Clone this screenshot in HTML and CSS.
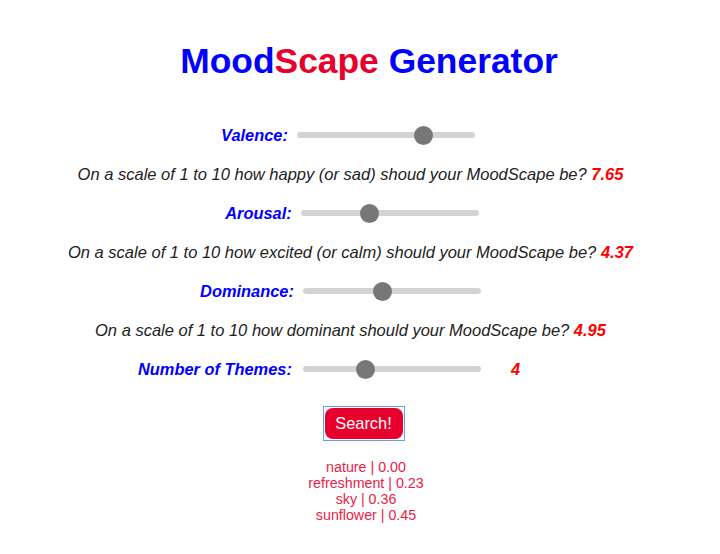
FILE: index.html
```html
<!DOCTYPE html>
<html>
<head>
<meta charset="utf-8">
<link rel="stylesheet" href="styles.css">
</head>
<body>
<h1 class="title"><span class="blue">Mood</span><span class="red">Scape</span> <span class="blue">Generator</span></h1>

<div class="row row-valence">
  <label class="lbl">Valence:</label>
  <input class="slider" type="range" min="1" max="10" step="0.01" value="7.65">
</div>
<p class="sentence">On a scale of 1 to 10 how happy (or sad) shoud your MoodScape be? <span class="val">7.65</span></p>

<div class="row row-arousal">
  <label class="lbl">Arousal:</label>
  <input class="slider" type="range" min="1" max="10" step="0.01" value="4.37">
</div>
<p class="sentence">On a scale of 1 to 10 how excited (or calm) should your MoodScape be? <span class="val">4.37</span></p>

<div class="row row-dominance">
  <label class="lbl">Dominance:</label>
  <input class="slider" type="range" min="1" max="10" step="0.01" value="4.95">
</div>
<p class="sentence">On a scale of 1 to 10 how dominant should your MoodScape be? <span class="val">4.95</span></p>

<div class="row row-themes">
  <label class="lbl">Number of Themes:</label>
  <input class="slider" type="range" min="1" max="10" step="1" value="4">
  <span class="val count">4</span>
</div>

<div class="actions">
  <span class="focus-ring"><button class="search">Search!</button></span>
</div>

<div class="results">
  <div>nature | 0.00</div>
  <div>refreshment | 0.23</div>
  <div>sky | 0.36</div>
  <div>sunflower | 0.45</div>
</div>
</body>
</html>
```

FILE: styles.css
```css
body {
  margin: 8px;
  font-family: "Liberation Sans", Arial, sans-serif;
  background: #fff;
}

.title {
  margin: 33px 0 0;
  padding-left: 18px;
  font-size: 35.4px;
  line-height: 40px;
  font-weight: bold;
  text-align: center;
  height: 40px;
}
.blue { color: #0000ff; }
.red { color: #e8002c; }

.row {
  margin-top: 0;
  height: 39px;
  display: flex;
  align-items: center;
  justify-content: center;
  gap: 9px;
}
.row-valence { margin-top: 34.5px; padding-right: 24px; }
.row-arousal { padding-right: 16px; }
.row-dominance { padding-right: 39px; }
.row-themes { padding-right: 62px; gap: 11px; }

.lbl {
  color: #0000ff;
  font-weight: bold;
  font-style: italic;
  font-size: 16.4px;
}

.slider {
  -webkit-appearance: none;
  appearance: none;
  margin: 0;
  width: 178px;
  height: 6px;
  border-radius: 3px;
  background: #d3d3d3;
  outline: none;
}
.slider::-webkit-slider-thumb {
  -webkit-appearance: none;
  appearance: none;
  width: 19px;
  height: 19px;
  border-radius: 50%;
  background: #777;
  border: none;
}

.sentence {
  margin: 0;
  height: 39px;
  line-height: 39px;
  text-align: center;
  padding-right: 19px;
  font-size: 16.5px;
  font-style: italic;
  color: #222;
}

.val {
  color: #ff0000;
  font-weight: bold;
  font-style: italic;
}
.count {
  margin-left: 19px;
  font-size: 16.4px;
}

.actions {
  margin-top: 17.5px;
  display: flex;
  justify-content: center;
  padding-left: 7px;
}
.focus-ring {
  display: inline-block;
  border: 1px solid #6a9bf2;
  padding: 1px;
  line-height: 0;
}
.search {
  height: 31px;
  width: 78px;
  padding: 0;
  border: none;
  border-radius: 8px;
  background: #e8002c;
  color: #fff;
  font-family: "Liberation Sans", Arial, sans-serif;
  font-size: 16.4px;
  line-height: 31px;
  outline: none;
}

.results {
  margin-top: 18px;
  padding-left: 12px;
  text-align: center;
  color: #ec1b45;
  font-size: 14.25px;
  line-height: 16px;
}
```
